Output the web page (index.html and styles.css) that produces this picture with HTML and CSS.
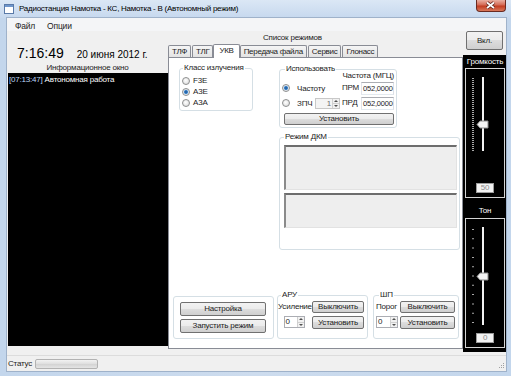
FILE: index.html
```html
<!DOCTYPE html>
<html lang="ru">
<head>
    <meta charset="UTF-8">
    <meta name="viewport" content="width=device-width, initial-scale=1.0">
    <title>Радиостанция Намотка</title>
    <link rel="stylesheet" href="styles.css">
</head>
<body>
<div class="window">
    <div class="titlebar">
        <svg class="app-icon" width="10" height="10" viewBox="0 0 10 10">
            <rect x="0.5" y="0.5" width="9" height="9" fill="#fff" stroke="#5a7aa8"/>
            <rect x="1" y="1" width="8" height="2" fill="#6f96cc"/>
        </svg>
        <span class="title">Радиостанция Намотка - КС, Намотка - В (Автономный режим)</span>
        <div class="close-btn">
            <svg width="28" height="11" viewBox="0 0 28 11">
                <path d="M10 2.5l7 5.5M17 2.5l-7 5.5" stroke="#5a1f17" stroke-width="3.4"/>
                <path d="M10 2.5l7 5.5M17 2.5l-7 5.5" stroke="#fff" stroke-width="1.8"/>
            </svg>
        </div>
    </div>

    <div class="client">
        <div class="menubar">
            <span>Файл</span>
            <span>Опции</span>
        </div>

        <div class="main">
            <!-- clock + information window -->
            <div class="left-col">
                <div class="clock">
                    <span class="time">7:16:49</span>
                    <span class="date">20 июня 2012 г.</span>
                </div>
                <div class="info-caption">Информационное окно</div>
                <div class="log"><span class="log-time">[07:13:47]</span> Автономная работа</div>
            </div>

            <!-- modes -->
            <div class="modes">
                <div class="modes-caption">Список режимов</div>
                <div class="tabs">
                    <span class="tab">ТЛФ</span>
                    <span class="tab">ТЛГ</span>
                    <span class="tab active">УКВ</span>
                    <span class="tab">Передача файла</span>
                    <span class="tab">Сервис</span>
                    <span class="tab">Глонасс</span>
                </div>
                <div class="tab-page">
                    <div class="page-top">
                        <fieldset class="group class-group">
                            <legend>Класс излучения</legend>
                            <label class="radio-row"><input type="radio" name="cls">F3E</label>
                            <label class="radio-row"><input type="radio" name="cls" checked>A3E</label>
                            <label class="radio-row"><input type="radio" name="cls">A3A</label>
                        </fieldset>

                        <div class="right-groups">
                            <fieldset class="group use-group">
                                <legend>Использовать</legend>
                                <div class="use-grid">
                                    <span class="freq-caption">Частота (МГЦ)</span>
                                    <label class="radio-row"><input type="radio" name="use" checked>Частоту</label>
                                    <span class="fld-label">ПРМ</span>
                                    <span class="textbox">052,0000</span>
                                    <div class="radio-row">
                                        <label class="radio-row"><input type="radio" name="use">ЗПЧ</label>
                                        <span class="spin spin-disabled">
                                            <span class="spin-val">1</span>
                                            <span class="spin-btns"><i class="up"></i><i class="down"></i></span>
                                        </span>
                                    </div>
                                    <span class="fld-label">ПРД</span>
                                    <span class="textbox">052,0000</span>
                                    <button class="btn btn-set">Установить</button>
                                </div>
                            </fieldset>

                            <fieldset class="group dkm-group">
                                <legend>Режим ДКМ</legend>
                                <div class="sunken tall"></div>
                                <div class="sunken short"></div>
                            </fieldset>
                        </div>
                    </div>

                    <div class="page-bottom">
                        <fieldset class="group start-group">
                            <button class="btn">Настройка</button>
                            <button class="btn">Запустить режим</button>
                        </fieldset>

                        <fieldset class="group ctl-group aru">
                            <legend>АРУ</legend>
                            <div class="ctl-grid">
                                <span class="fld-label">Усиление</span>
                                <button class="btn">Выключить</button>
                                <span class="spin">
                                    <span class="spin-val">0</span>
                                    <span class="spin-btns"><i class="up"></i><i class="down"></i></span>
                                </span>
                                <button class="btn">Установить</button>
                            </div>
                        </fieldset>

                        <fieldset class="group ctl-group shp">
                            <legend>ШП</legend>
                            <div class="ctl-grid">
                                <span class="fld-label">Порог</span>
                                <button class="btn">Выключить</button>
                                <span class="spin">
                                    <span class="spin-val">0</span>
                                    <span class="spin-btns"><i class="up"></i><i class="down"></i></span>
                                </span>
                                <button class="btn">Установить</button>
                            </div>
                        </fieldset>
                    </div>
                </div>
            </div>

            <!-- power + volume / tone -->
            <div class="side">
                <button class="btn btn-on">Вкл.</button>
                <div class="levels">
                    <div class="level-caption">Громкость</div>
                    <div class="level-box">
                        <svg width="38" height="110" viewBox="0 0 38 110">
                            <line x1="7" y1="9" x2="7" y2="82" stroke="#a8a8a8" stroke-width="2" stroke-dasharray="1 1"/>
                            <rect x="16" y="8" width="2" height="74" fill="#f2f2f2"/>
                            <polygon points="11,55.5 14,52 22,52 22,59 14,59" fill="#f4f4f4" stroke="#8a8a8a"/>
                        </svg>
                        <span class="level-value">50</span>
                    </div>
                    <div class="level-caption ton">Тон</div>
                    <div class="level-box">
                        <svg width="38" height="110" viewBox="0 0 38 110">
                            <line x1="7" y1="10" x2="7" y2="104" stroke="#a8a8a8" stroke-width="2" stroke-dasharray="1 8.3"/>
                            <rect x="16" y="8" width="2" height="98" fill="#f2f2f2"/>
                            <polygon points="11,57.5 14,54 22,54 22,61 14,61" fill="#f4f4f4" stroke="#8a8a8a"/>
                        </svg>
                        <span class="level-value">0</span>
                    </div>
                </div>
            </div>
        </div>

        <div class="statusbar">
            <span>Статус</span>
            <div class="progress"></div>
            <svg class="grip" width="8" height="8" viewBox="0 0 8 8" fill="#a0a0a0">
                <rect x="6" y="1" width="1" height="1"/>
                <rect x="4" y="3" width="1" height="1"/>
                <rect x="6" y="3" width="1" height="1"/>
                <rect x="2" y="5" width="1" height="1"/>
                <rect x="4" y="5" width="1" height="1"/>
                <rect x="6" y="5" width="1" height="1"/>
            </svg>
        </div>
    </div>
</div>
</body>
</html>
```

FILE: styles.css
```css
* {
    box-sizing: border-box;
}

body {
    margin: 0;
    font-family: "Liberation Sans", Arial, sans-serif;
    font-size: 8px;
    letter-spacing: -0.2px;
    color: #1c1c1c;
    background: #bfd3ea;
}

.window {
    width: 511px;
    height: 376px;
    background: linear-gradient(90deg, #c3d6ec, #cddcee 50%, #c3d6ec);
    display: flex;
    flex-direction: column;
}

/* title bar */
.titlebar {
    height: 18px;
    display: flex;
    align-items: flex-start;
    background: linear-gradient(#dbe7f5, #c6d8ee);
}

.app-icon {
    margin: 4px 0 0 4px;
}

.title {
    margin-left: 5px;
    line-height: 18px;
    font-size: 8px;
    letter-spacing: -0.25px;
    color: #000;
}

.close-btn {
    margin-left: auto;
    margin-right: 5px;
    width: 30px;
    height: 12px;
    border: 1px solid #6a2a20;
    border-top: 0;
    border-radius: 0 0 4px 4px;
    background: linear-gradient(#eab0a2, #d46a55 45%, #c23d22 55%, #d9785a);
}

.close-btn svg {
    display: block;
}

/* client area */
.client {
    margin: 0 5px 0 7px;
    height: 353px;
    background: #f0f0f0;
    display: flex;
    flex-direction: column;
    box-shadow: 0 0 0 1px #9fb2ca;
}

.menubar {
    height: 13px;
    padding: 3px 0 0 8px;
    display: flex;
    gap: 12px;
    line-height: 10px;
    font-size: 8.5px;
    background: #f4f5f7;
}

.main {
    height: 324px;
    display: flex;
}

.left-col {
    width: 161px;
    padding-top: 14px;
    display: flex;
    flex-direction: column;
}

.clock {
    height: 16px;
    padding-left: 10px;
    display: flex;
    align-items: baseline;
    gap: 13px;
    line-height: 16px;
    letter-spacing: 0;
    color: #000;
}

.time {
    font-size: 14px;
}

.date {
    font-size: 10px;
}

.info-caption {
    margin-top: 1px;
    height: 11px;
    line-height: 11px;
    text-align: center;
}

.log {
    margin-left: 1px;
    height: 273px;
    padding: 2px 1px;
    background: #000;
    color: #fff;
    line-height: 10px;
}

.log-time {
    color: #bcd4f6;
}

/* tabs */
.modes {
    width: 295px;
    display: flex;
    flex-direction: column;
}

.modes-caption {
    height: 13px;
    line-height: 13px;
    padding-left: 95px;
}

.tabs {
    height: 13px;
    display: flex;
    align-items: flex-end;
    gap: 1px;
}

.tab {
    height: 12px;
    padding: 0 3px;
    line-height: 11px;
    letter-spacing: -0.3px;
    border: 1px solid #898c95;
    border-bottom: 0;
    border-radius: 2px 2px 0 0;
    background: linear-gradient(#f5f5f5, #e3e3e3);
}

.tab.active {
    position: relative;
    z-index: 1;
    height: 14px;
    margin: 0 -1px -1px;
    padding: 0 5px;
    line-height: 12px;
    background: #fff;
}

.tab-page {
    height: 292px;
    padding: 5px 0 9px;
    background: #fff;
    border: 1px solid #898c95;
    display: flex;
    flex-direction: column;
}

.page-top {
    display: flex;
    align-items: flex-start;
}

.page-bottom {
    margin-top: auto;
    padding-left: 4px;
    display: flex;
    align-items: flex-end;
}

/* group boxes */
.group {
    margin: 0;
    min-width: 0;
    border: 1px solid #d5dfe5;
    border-radius: 3px;
}

.group legend {
    padding: 0 1px;
    line-height: 10px;
}

.class-group {
    width: 74px;
    margin-left: 10px;
    padding: 2px 0 2px 2px;
}

.class-group legend {
    margin-left: 1px;
}

.right-groups {
    margin-left: 26px;
    display: flex;
    flex-direction: column;
}

.use-group {
    width: 118px;
    margin-top: 1px;
    padding: 0 1px 2px 2px;
}

.use-group legend {
    margin-left: 3px;
}

.use-grid {
    margin-top: -4px;
    display: grid;
    grid-template-columns: 60px 19px 33px;
    grid-template-rows: 10px 14px 14px 14px;
    row-gap: 1px;
}

.freq-caption {
    grid-column: 1 / 4;
    justify-self: end;
    margin-top: 1px;
    line-height: 10px;
}

.use-grid .radio-row {
    height: 14px;
}

.use-grid .radio-row input {
    margin-right: 7px;
}

.fld-label {
    align-self: center;
    line-height: 10px;
}

.btn-set {
    grid-column: 1 / 4;
    align-self: end;
    height: 12px;
    margin-left: 2px;
}

.dkm-group {
    width: 181px;
    margin-top: 4px;
    padding: 3px 2px 21px 4px;
}

.sunken {
    background: #eeeeee;
    border-style: solid;
    border-width: 2px 1px 1px 2px;
    border-color: #6d6d6d #e2e2e2 #e2e2e2 #8a8a8a;
}

.sunken.tall {
    height: 45px;
}

.sunken.short {
    height: 35px;
    margin-top: 3px;
}

.start-group {
    width: 101px;
    padding: 5px 7px 5px 6px;
    display: flex;
    flex-direction: column;
    gap: 3px;
}

.start-group .btn {
    height: 14px;
}

.ctl-group {
    padding: 1px 2px 9px 0;
}

.ctl-group legend {
    margin-left: 3px;
}

.aru {
    width: 91px;
    margin-left: 3px;
}

.shp {
    width: 86px;
    margin-left: 5px;
    padding: 1px 3px 9px 2px;
}

.ctl-grid {
    display: grid;
    grid-template-rows: 12px 13px;
    row-gap: 3px;
    column-gap: 2px;
}

.aru .ctl-grid {
    grid-template-columns: 32px 52px;
}

.shp .ctl-grid {
    grid-template-columns: 22px 55px;
}

.aru .spin {
    justify-self: center;
}

.shp .spin {
    width: 22px;
}

/* controls */
.radio-row {
    display: flex;
    align-items: center;
    height: 11px;
}

.radio-row input {
    appearance: none;
    flex: none;
    width: 8px;
    height: 8px;
    margin: 0 3px 0 0;
    border: 1px solid #8e8f8f;
    border-radius: 50%;
    background: radial-gradient(circle at 45% 40%, #fff, #d6d6d6);
}

.radio-row input:checked {
    background: radial-gradient(circle, #1b4b86 0, #3f86cc 1.6px, #dfe6ee 2.4px, #f8f8f8 100%);
}

.textbox {
    height: 13px;
    align-self: center;
    padding: 0 1px;
    font-size: 7.5px;
    line-height: 11px;
    background: #fff;
    border: 1px solid;
    border-color: #abadb3 #dbdfe6 #e3e9ef #e2e3ea;
}

.btn {
    font: inherit;
    letter-spacing: inherit;
    color: #1c1c1c;
    padding: 0;
    line-height: 10px;
    border: 1px solid #707070;
    border-radius: 2px;
    background: linear-gradient(#f2f2f2, #ebebeb 50%, #dddddd 50%, #cfcfcf);
}

.spin {
    display: flex;
    width: 21px;
    height: 12px;
    border: 1px solid #abadb3;
    background: #fff;
}

.spin-val {
    flex: 1;
    padding-left: 1px;
    line-height: 10px;
}

.spin-disabled {
    width: 25px;
    height: 11px;
    margin: 0 2px 0 auto;
    border-color: #c8c8c8;
    background: #f4f4f4;
    color: #6d6d6d;
}

.spin-disabled .spin-val {
    text-align: right;
    padding-right: 1px;
}

.spin-btns {
    width: 7px;
    display: flex;
    flex-direction: column;
    border-left: 1px solid #d0d0d0;
}

.spin-btns i {
    flex: 1;
    display: flex;
    align-items: center;
    justify-content: center;
    background: #f1f1f1;
}

.spin-btns i + i {
    border-top: 1px solid #d0d0d0;
}

.spin-btns i::after {
    content: "";
    border: 2px solid transparent;
}

.spin-btns .up::after {
    border-top-width: 0;
    border-bottom-color: #505050;
}

.spin-btns .down::after {
    border-bottom-width: 0;
    border-top-color: #505050;
}

/* right column */
.side {
    width: 43px;
    display: flex;
    flex-direction: column;
}

.btn-on {
    height: 19px;
    margin: 0 3px;
}

.levels {
    height: 297px;
    margin-top: 5px;
    padding: 0 1px 4px 2px;
    background: #000;
    color: #fff;
}

.level-caption {
    height: 13px;
    line-height: 13px;
    text-align: center;
}

.level-caption.ton {
    height: 20px;
    padding-top: 6px;
    line-height: 14px;
}

.level-box {
    height: 130px;
    border: 1px solid #d4d4d4;
    display: flex;
    flex-direction: column;
    align-items: center;
}

.level-box svg {
    display: block;
}

.level-value {
    width: 18px;
    height: 10px;
    margin-top: 4px;
    line-height: 8px;
    text-align: center;
    border: 1px solid #9c9c9c;
    background: #f3f3f3;
    color: #8c8c8c;
}

/* status bar */
.statusbar {
    height: 16px;
    padding-left: 1px;
    border-top: 1px solid #dcdcdc;
    display: flex;
    align-items: center;
}

.progress {
    width: 63px;
    height: 10px;
    margin-left: 3px;
    border: 1px solid #b2b2b2;
    border-radius: 2px;
    background: linear-gradient(#f2f2f2, #dedede 50%, #d2d2d2 50%, #e4e4e4);
}

.grip {
    margin: 4px 1px 0 auto;
}
```
